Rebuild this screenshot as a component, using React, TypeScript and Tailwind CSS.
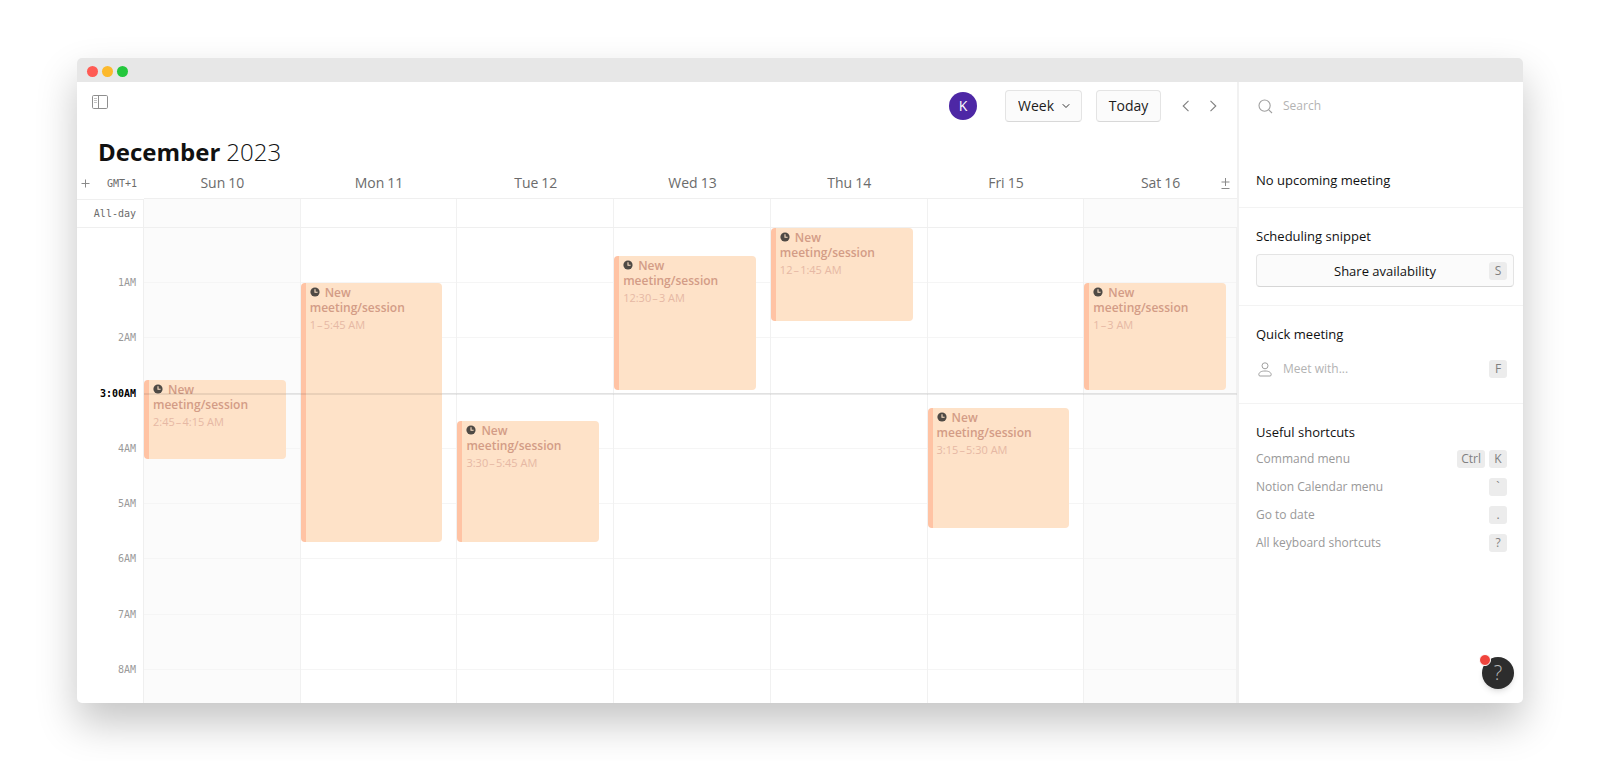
import { ChevronDown } from "lucide-react";

type CalendarEvent = { start: number; end: number; from: string; to: string };
type Day = { name: string; date: number; weekend?: boolean; event?: CalendarEvent };

const VISIBLE_HOURS = 8.6;
const NOW = 3;

const days: Day[] = [
  { name: "Sun", date: 10, weekend: true, event: { start: 2.75, end: 4.25, from: "2:45", to: "4:15 AM" } },
  { name: "Mon", date: 11, event: { start: 1, end: 5.75, from: "1", to: "5:45 AM" } },
  { name: "Tue", date: 12, event: { start: 3.5, end: 5.75, from: "3:30", to: "5:45 AM" } },
  { name: "Wed", date: 13, event: { start: 0.5, end: 3, from: "12:30", to: "3 AM" } },
  { name: "Thu", date: 14, event: { start: 0, end: 1.75, from: "12", to: "1:45 AM" } },
  { name: "Fri", date: 15, event: { start: 3.25, end: 5.5, from: "3:15", to: "5:30 AM" } },
  { name: "Sat", date: 16, weekend: true, event: { start: 1, end: 3, from: "1", to: "3 AM" } },
];

const shortcuts = [
  { label: "Command menu", keys: ["Ctrl", "K"] },
  { label: "Notion Calendar menu", keys: ["`"] },
  { label: "Go to date", keys: ["."] },
  { label: "All keyboard shortcuts", keys: ["?"] },
];

const hours = [1, 2, 3, 4, 5, 6, 7, 8];
const dayColumns = "grid grid-cols-[repeat(6,157fr)_153fr] min-w-0 flex-1";
const hourRows = "grid grid-rows-[repeat(8,5fr)_3fr]";
const mono = "font-['DejaVu_Sans_Mono',monospace] text-[10px]";

const percent = (value: number) => `${(value / VISIBLE_HOURS) * 100}%`;

function Key({ children }: { children: string }) {
  return (
    <kbd className="flex h-[18px] min-w-[18px] items-center justify-center rounded-[3px] bg-[#ececec] px-1 text-xs text-[#808080] [font-family:inherit]">
      {children}
    </kbd>
  );
}

function PanelIcon() {
  return (
    <svg width="16" height="14" viewBox="0 0 16 14" fill="none" stroke="#8f8f8f">
      <rect x="0.5" y="0.5" width="15" height="13" rx="1.2" />
      <path d="M6.5 0.5v13" />
      <path d="M2 3.5h3M2 5.5h3M2 7.5h3" stroke="#b5b5b5" strokeWidth="0.8" />
    </svg>
  );
}

function ClockIcon() {
  return (
    <svg className="mr-[5px] inline-block align-baseline" width="10" height="10" viewBox="0 0 10 10">
      <circle cx="5" cy="5" r="4.6" fill="#4f4a45" />
      <path d="M5 2.2V5.2H7.6" fill="none" stroke="#fee2c8" strokeWidth="1.1" />
    </svg>
  );
}

function Arrow({ label, d }: { label: string; d: string }) {
  return (
    <button aria-label={label} className="flex h-8 w-[27px] items-center justify-center">
      <svg width="8" height="12" viewBox="0 0 8 12" fill="none" stroke="#808080" strokeWidth="1.1">
        <path d={d} />
      </svg>
    </button>
  );
}

function EventCard({ event, last }: { event: CalendarEvent; last: boolean }) {
  return (
    <div
      className={`absolute left-0 pb-1 ${last ? "right-2.5" : "right-3.5"}`}
      style={{ top: percent(event.start), height: percent(event.end - event.start) }}
    >
      <div className="h-full overflow-hidden rounded-[4px] border-l-[5px] border-[#ffc3a4] bg-[#fee2c8] pt-0.5 pr-2 pl-1">
        <p className="text-xs leading-[15px] font-semibold text-[#d39c86]">
          <ClockIcon />
          New meeting/session
        </p>
        <p className="mt-0.5 text-[11px] leading-[15px] text-[#e6b8a4]">
          {event.from}
          {"\u200a–\u200a"}
          {event.to}
        </p>
      </div>
    </div>
  );
}

function Calendar() {
  return (
    <main className="flex min-w-0 flex-1 flex-col">
      <header className="flex h-12 items-center pr-[11px]">
        <button aria-label="Toggle sidebar" className="mr-auto mb-2 ml-[15px]">
          <PanelIcon />
        </button>
        <span className="flex size-7 items-center justify-center rounded-full bg-[#4d27a5] text-sm font-medium text-white">
          K
        </span>
        <div className="relative ml-7">
          <select
            aria-label="Calendar view"
            className="h-8 w-[77px] appearance-none rounded-[4px] border border-[#e4e4e4] border-b-[#d8d8d8] bg-[#fbfbfb] pl-3 text-sm text-[#1c1c1c]"
          >
            <option>Week</option>
          </select>
          <ChevronDown
            className="pointer-events-none absolute top-2.5 right-2.5 text-[#333]"
            size={12}
            strokeWidth={2}
          />
        </div>
        <button className="ml-3.5 h-8 w-[65px] rounded-[4px] border border-[#e4e4e4] border-b-[#d8d8d8] bg-[#fbfbfb] text-sm text-[#1c1c1c]">
          Today
        </button>
        <div className="ml-[11px] flex">
          <Arrow label="Previous week" d="M6.5 0.8L1.2 6l5.3 5.2" />
          <Arrow label="Next week" d="M1.5 0.8L6.8 6l-5.3 5.2" />
        </div>
      </header>

      <h1 className="flex h-[38px] items-center gap-1.5 pt-1.5 pl-[21px] text-2xl text-[#111]">
        <span className="font-bold">December</span>
        <span className="font-light">2023</span>
      </h1>

      <div className="flex h-[31px] text-[#6b6b6b]">
        <div className={`flex w-[67px] items-center justify-between pr-[7px] pl-1 ${mono}`}>
          <button aria-label="Add time zone">
            <svg width="9" height="9" viewBox="0 0 9 9" stroke="#8a8a8a">
              <path d="M4.5 0.5v8M0.5 4.5h8" />
            </svg>
          </button>
          <span>GMT+1</span>
        </div>
        <div className={`relative border-b border-[#efefef] ${dayColumns}`}>
          {days.map((day) => (
            <div key={day.name} className="flex items-center justify-center gap-[3px] text-sm">
              <span>{day.name}</span>
              <span>{day.date}</span>
            </div>
          ))}
          <button aria-label="Expand all-day events" className="absolute top-2.5 right-[7px]">
            <svg width="9" height="11" viewBox="0 0 9 11" stroke="#8a8a8a">
              <path d="M4.5 0v8M0.5 4h8M0.5 10.5h8" />
            </svg>
          </button>
        </div>
      </div>

      <div className="flex h-[29px] border-b border-[#efefef]">
        <div
          className={`flex w-[67px] items-center justify-end border-t border-r border-[#efefef] pr-[7px] text-[#6b6b6b] ${mono}`}
        >
          All-day
        </div>
        <div className={dayColumns}>
          {days.map((day) => (
            <div
              key={day.name}
              className={`border-r border-[#f1f1f1] last:border-r-0 ${day.weekend ? "bg-[#fbfbfb]" : ""}`}
            />
          ))}
        </div>
      </div>

      <div className="flex min-h-[430px] flex-1">
        <div className={`w-[67px] border-r border-[#efefef] pr-[7px] ${hourRows} ${mono}`}>
          {hours.map((hour) => (
            <div key={hour} className="flex items-end justify-end">
              <span
                className={`translate-y-1/2 leading-4 ${hour === NOW ? "font-bold text-black" : "text-[#9a9a9a]"}`}
              >
                {hour === NOW ? `${hour}:00AM` : `${hour}AM`}
              </span>
            </div>
          ))}
        </div>
        <div className={`relative ${dayColumns}`}>
          {days.map((day, index) => (
            <div
              key={day.name}
              className={`relative border-r border-[#f1f1f1] last:border-r-0 ${hourRows} ${day.weekend ? "bg-[#fbfbfb]" : ""}`}
            >
              {hours.map((hour) => (
                <div key={hour} className="border-b border-[#f5f5f5]" />
              ))}
              {day.event && <EventCard event={day.event} last={index === days.length - 1} />}
            </div>
          ))}
          <div className="absolute inset-x-0 h-0.5 -translate-y-1/2 bg-black/8" style={{ top: percent(NOW) }} />
        </div>
      </div>
    </main>
  );
}

function Sidebar() {
  return (
    <aside className="relative w-[286px] shrink-0 border-l-2 border-[#f1f1f1] text-[13px] leading-5 text-[#111]">
      <label className="flex h-12 items-center gap-2.5 pl-[19px] text-xs">
        <svg width="15" height="15" viewBox="0 0 15 15" fill="none" stroke="#a0a0a0" strokeWidth="1.1">
          <circle cx="6.6" cy="6.6" r="5.6" />
          <path d="M10.8 10.8L14 14" />
        </svg>
        <input
          type="search"
          aria-label="Search"
          placeholder="Search"
          className="min-w-0 flex-1 outline-none placeholder:text-[#b3b3b3]"
        />
      </label>

      <section className="border-b border-[#f3f3f3] px-[17px] pt-10 pb-[17px]">
        <h2>No upcoming meeting</h2>
      </section>

      <section className="border-b border-[#f3f3f3] pt-[18px] pr-[9px] pb-[18px] pl-[17px]">
        <h2>Scheduling snippet</h2>
        <button className="relative mt-2 flex h-[33px] w-full items-center justify-center rounded-[4px] border border-[#e4e4e4] border-b-[#d6d6d6] bg-[#fbfbfb]">
          Share availability
          <span className="absolute right-1.5">
            <Key>S</Key>
          </span>
        </button>
      </section>

      <section className="border-b border-[#f3f3f3] pt-[18px] pr-4 pb-[25px] pl-[17px]">
        <h2>Quick meeting</h2>
        <label className="mt-4 flex h-[18px] items-center gap-[11px] pl-0.5 text-xs">
          <svg width="14" height="15" viewBox="0 0 14 15" fill="none" stroke="#a0a0a0">
            <circle cx="7" cy="3.8" r="3" />
            <path d="M0.8 12.8c0-2.5 2.4-3.8 6.2-3.8s6.2 1.3 6.2 3.8c0 .7-.4 1.2-1.2 1.2H2c-.8 0-1.2-.5-1.2-1.2z" />
          </svg>
          <input
            type="text"
            aria-label="Meet with"
            placeholder="Meet with..."
            className="min-w-0 flex-1 outline-none placeholder:text-[#b3b3b3]"
          />
          <Key>F</Key>
        </label>
      </section>

      <section className="pt-[18px] pr-4 pl-[17px]">
        <h2>Useful shortcuts</h2>
        <ul className="mt-[3px] text-xs">
          {shortcuts.map((shortcut) => (
            <li key={shortcut.label} className="flex h-7 items-center justify-between text-[#999]">
              <span>{shortcut.label}</span>
              <span className="flex gap-1">
                {shortcut.keys.map((key) => (
                  <Key key={key}>{key}</Key>
                ))}
              </span>
            </li>
          ))}
        </ul>
      </section>

      <button
        aria-label="Help"
        className="absolute right-[9px] bottom-3.5 flex size-8 items-center justify-center rounded-full bg-[#2d2d2d] shadow-md"
      >
        <span className="text-xl font-light text-[#b8b8b8]">?</span>
        <span className="absolute -top-[3px] -left-[3px] size-3 rounded-full border border-white bg-[#f0443c]" />
      </button>
    </aside>
  );
}

export default function App() {
  return (
    <div className="flex min-h-screen bg-white px-[77px] py-[58px] font-['Open_Sans','Noto_Sans',sans-serif]">
      <div className="flex min-w-0 flex-1 flex-col overflow-hidden rounded-[5px] bg-white shadow-[0_20px_40px_rgba(0,0,0,0.23)]">
        <div className="flex h-6 shrink-0 items-center gap-1 bg-[#e7e7e7] pt-0.5 pl-2.5">
          <span className="size-[11px] rounded-full bg-[#ff5b54]" />
          <span className="size-[11px] rounded-full bg-[#fcb92c]" />
          <span className="size-[11px] rounded-full bg-[#24c73d]" />
        </div>
        <div className="flex flex-1">
          <Calendar />
          <Sidebar />
        </div>
      </div>
    </div>
  );
}
